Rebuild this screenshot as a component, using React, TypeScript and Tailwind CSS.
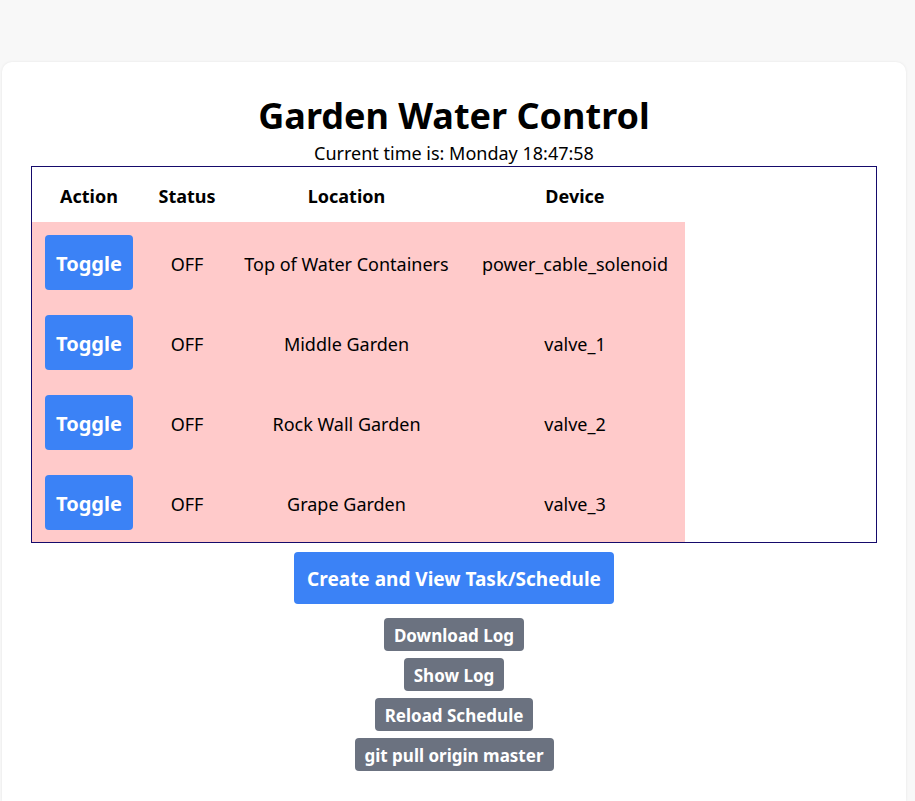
const devices = [
  { location: "Top of Water Containers", device: "power_cable_solenoid" },
  { location: "Middle Garden", device: "valve_1" },
  { location: "Rock Wall Garden", device: "valve_2" },
  { location: "Grape Garden", device: "valve_3" },
];

const tools = ["Download Log", "Show Log", "Reload Schedule", "git pull origin master"];

export default function App() {
  return (
    <div
      className="min-h-[801px] bg-[#f8f8f8] pt-[62px] text-black"
      style={{ fontFamily: '"Noto Sans", "Open Sans", sans-serif' }}
    >
      <div className="ml-[2px] mr-[9px] min-h-[739px] rounded-t-[10px] bg-white px-[29px] pt-[34px] shadow-[0_0_3px_rgba(0,0,0,0.08)]">
        <h1 className="text-center text-4xl font-bold leading-10">Garden Water Control</h1>
        <p className="mt-[4px] text-center text-lg leading-[26px]">Current time is: Monday 18:47:58</p>

        <div className="border border-[#150a6b]">
          <table className="border-collapse text-center text-lg">
            <thead>
              <tr className="h-[55px]">
                <th className="w-[114px] px-3 pt-[2px] font-bold">Action</th>
                <th className="w-[82px] px-3 pt-[2px] font-bold">Status</th>
                <th className="w-[237px] px-3 pt-[2px] font-bold">Location</th>
                <th className="w-[220px] px-3 pt-[2px] font-bold">Device</th>
              </tr>
            </thead>
            <tbody>
              {devices.map((d) => (
                <tr key={d.device} className="h-20 bg-[#ffcaca]">
                  <td className="px-[13px]">
                    <button className="h-[55px] w-[88px] rounded-[4px] bg-[#3b82f6] pt-[3px] text-xl font-bold text-white">
                      Toggle
                    </button>
                  </td>
                  <td className="px-3 pt-[4px]">OFF</td>
                  <td className="px-3 pt-[4px]">{d.location}</td>
                  <td className="px-3 pt-[4px]">{d.device}</td>
                </tr>
              ))}
            </tbody>
          </table>
        </div>

        <div className="mt-[9px] flex flex-col items-center">
          <button className="h-[52px] rounded-[4px] bg-[#3b82f6] px-[13px] pt-[3px] text-[19px] font-bold text-white">
            Create and View Task/Schedule
          </button>
          <div className="mt-[14px] flex flex-col items-center gap-[7px]">
            {tools.map((t) => (
              <button
                key={t}
                className="h-[33px] rounded-[4px] bg-[#6b7280] px-[10px] pt-[2px] text-[17px] font-bold text-white"
              >
                {t}
              </button>
            ))}
          </div>
        </div>
      </div>
    </div>
  );
}
